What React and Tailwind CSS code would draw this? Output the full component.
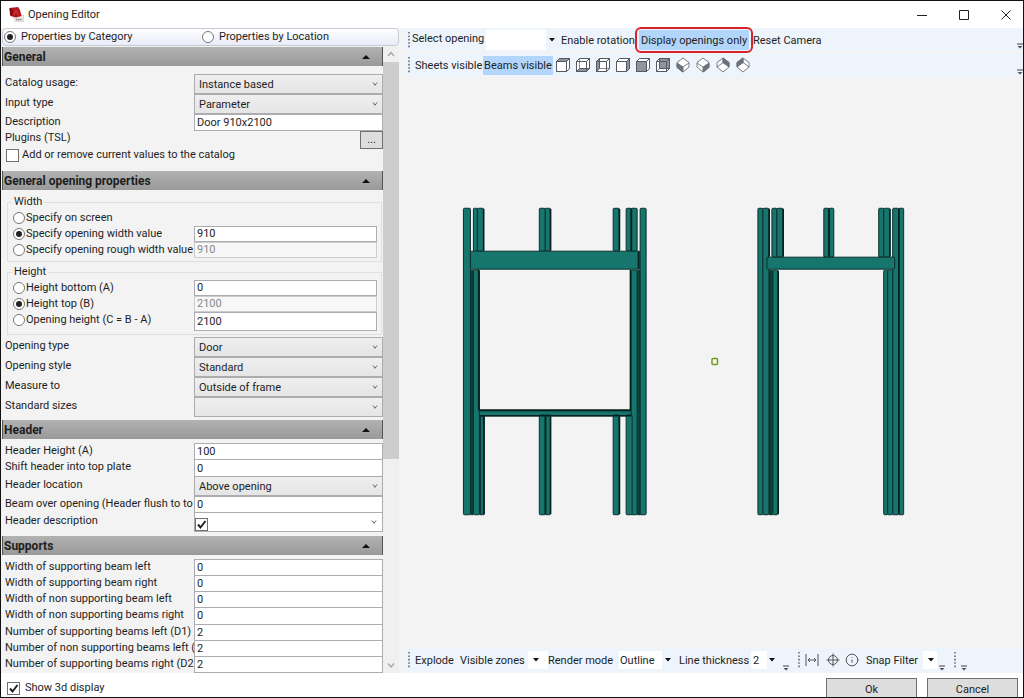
import { Info } from 'lucide-react';

const TEAL = '#16766e';

// each member: [x, y, width, height]
const LEFT_FRAME = [
  [470, 270, 3, 246, 'dark'],
  [463, 208, 7, 308],
  [473, 208, 4, 44],
  [477, 208, 6, 44],
  [539, 208, 6, 44],
  [545, 208, 5, 44],
  [613, 208, 6, 44],
  [626, 208, 5, 44],
  [631, 208, 6, 44],
  [479, 416, 2, 100, 'dark'],
  [480, 416, 4, 100],
  [470, 251, 170, 19],
  [473, 270, 6, 246],
  [637, 270, 4, 246, 'dark'],
  [631, 270, 6, 246],
  [479, 411, 152, 6],
  [539, 415, 6, 101],
  [545, 415, 5, 101],
  [613, 415, 6, 101],
  [626, 415, 6, 101],
  [640, 208, 6, 308],
];

const RIGHT_FRAME = [
  [769, 270, 4, 246, 'dark'],
  [758, 208, 5, 308],
  [763, 208, 6, 308],
  [772, 208, 5, 50],
  [777, 208, 6, 50],
  [824, 208, 5, 50],
  [829, 208, 5, 50],
  [879, 208, 5, 50],
  [884, 208, 6, 50],
  [893, 208, 6, 308],
  [899, 208, 5, 308],
  [773, 270, 5, 246],
  [884, 270, 4, 246],
  [888, 270, 5, 246],
  [767, 257, 128, 13],
];

// right or side edges that are drawn heavier
const HEAVY = [
  [478, 270, 141], [630, 270, 141], [483, 209, 42], [483, 417, 98], [550, 209, 42], [550, 417, 98],
  [619, 209, 42], [619, 417, 98], [545, 417, 98], [631, 209, 42], [638, 252, 17],
  [769, 209, 48], [783, 209, 48], [829, 209, 48], [890, 209, 48], [778, 271, 244], [899, 209, 306],
];

const VIEW_CUBES = ['top', 'bottom', 'left', 'right', 'front', 'back'];
const CUBE_FACES = {
  top: 'M1.5 4.5 4.5 1.5H14.5L11.5 4.5Z',
  bottom: 'M1.5 14.5 4.5 11.5H14.5L11.5 14.5Z',
  left: 'M1.5 4.5 4.5 1.5V11.5L1.5 14.5Z',
  right: 'M11.5 4.5 14.5 1.5V11.5L11.5 14.5Z',
  front: 'M1.5 4.5H11.5V14.5H1.5Z',
  back: 'M4.5 1.5H14.5V11.5H4.5Z',
};
const ISO_FACES = {
  'south west': 'M2 6.5 7.5 10V15L2 10.5Z',
  'south east': 'M14 6.5 8.5 10V15L14 10.5Z',
  'north east': 'M8 1 14 5.5V9.5L8 5.5Z',
  'north west': 'M8 1 2 5.5V9.5L8 5.5Z',
};

function Beam({ x, y, w, h, dark }) {
  return (
    <rect
      x={x}
      y={y + 0.5}
      width={w}
      height={h - 1}
      rx="1"
      fill={dark ? '#0d3f3b' : TEAL}
      stroke="#0b2f2c"
      strokeWidth="1"
    />
  );
}

function Chevron() {
  return (
    <svg viewBox="0 0 6 5" className="pointer-events-none absolute top-1/2 right-[5px] h-[5px] w-[6px] -translate-y-1/2">
      <path d="M1 1 3 3.8 5 1" fill="none" stroke="#666" strokeWidth="1" />
    </svg>
  );
}

function Arrow() {
  return (
    <svg viewBox="0 0 6 4" className="h-1 w-1.5 shrink-0">
      <path d="M0 0H6L3 3.5Z" fill="#111" />
    </svg>
  );
}

function Grip() {
  return (
    <svg viewBox="0 0 2 18" className="h-[18px] w-0.5 shrink-0">
      <path d="M1 1V18" stroke="#555" strokeWidth="1.4" strokeDasharray="1.6 1.8" />
    </svg>
  );
}

function Overflow() {
  return (
    <svg viewBox="0 0 6 6" className="h-1.5 w-1.5 shrink-0">
      <path d="M0 1H6" stroke="#444" strokeWidth="1" />
      <path d="M0.5 3H5.5L3 5.5Z" fill="#555" />
    </svg>
  );
}

function CheckBox({ id, label, checked, bare }) {
  return (
    <span className="relative h-[13px] w-[13px] shrink-0">
      <input
        id={id}
        type="checkbox"
        defaultChecked={checked}
        aria-label={bare ? label : undefined}
        className="peer block h-[13px] w-[13px] appearance-none border border-[#707070] bg-white"
      />
      <svg viewBox="0 0 13 13" className="pointer-events-none absolute inset-0 hidden h-[13px] w-[13px] peer-checked:block">
        <path d="M3 6.5 5.5 9.5 10.5 3" fill="none" stroke="#222" strokeWidth="2" />
      </svg>
    </span>
  );
}

function Radio({ id, name, checked }) {
  return (
    <input
      id={id}
      type="radio"
      name={name}
      defaultChecked={checked}
      className="flex h-3 w-3 shrink-0 appearance-none items-center justify-center rounded-full border border-[#777] bg-white before:hidden before:h-1.5 before:w-1.5 before:rounded-full before:bg-[#222] checked:before:block"
    />
  );
}

function Section({ title, className = '', children }) {
  return (
    <section className={`flex flex-col ${className}`}>
      <h2 className="flex h-[19px] shrink-0 items-center justify-between border-r border-l border-[#555] bg-linear-to-b from-[#b2b2b2] to-[#999] pr-3 pl-px text-xs font-bold">
        {title}
        <svg viewBox="0 0 8 4" className="h-1 w-2">
          <path d="M0 4H8L4 0Z" fill="#111" />
        </svg>
      </h2>
      {children}
    </section>
  );
}

function SelectRow({ id, label, value }) {
  return (
    <div className="flex h-5 items-start">
      <label htmlFor={id} className="w-48 shrink-0 truncate pl-[3px] leading-[18px]">{label}</label>
      <div className="relative h-5 flex-1">
        <select id={id} className="h-5 w-full appearance-none border border-[#acacac] bg-linear-to-b from-[#efefef] to-[#e5e5e5] pt-px pl-1 leading-4">
          <option>{value}</option>
        </select>
        <Chevron />
      </div>
    </div>
  );
}

function TextRow({ id, label, value, className = 'h-4' }) {
  return (
    <div className={`flex items-stretch ${className}`}>
      <label htmlFor={id} className="h-4 w-48 shrink-0 overflow-hidden pl-[3px] leading-4 whitespace-nowrap">{label}</label>
      <input id={id} type="text" defaultValue={value} className="min-w-0 flex-1 border border-b-0 border-[#abadb3] bg-white px-0.5 leading-[15px]" />
    </div>
  );
}

function RadioRow({ id, name, label, value, checked, disabled, className = 'h-4' }) {
  return (
    <div className={`flex items-stretch pl-[5px] ${className}`}>
      <div className="flex h-4 w-[181px] shrink-0 items-center gap-px">
        <Radio id={id} name={name} checked={checked} />
        <label htmlFor={id} className="leading-4 whitespace-nowrap">{label}</label>
      </div>
      {value !== undefined && (
        <input
          type="text"
          aria-label={label}
          defaultValue={value}
          disabled={disabled}
          className="min-w-0 flex-1 border border-[#abadb3] bg-white px-0.5 leading-[14px] disabled:border-[#ccc] disabled:bg-[#f7f7f7] disabled:text-[#888]"
        />
      )}
    </div>
  );
}

function Properties() {
  return (
    <aside className="flex w-100 shrink-0 flex-col pr-0.5 pl-px">
      <div className="flex h-[18px] shrink-0 items-center rounded-sm border border-[#c8cad6] bg-linear-to-b from-white to-[#e9ebf7]">
        <div className="flex w-[199px] items-center gap-[5px] pl-px">
          <Radio id="by-category" name="sort" checked />
          <label htmlFor="by-category">Properties by Category</label>
        </div>
        <div className="flex items-center gap-[5px]">
          <Radio id="by-location" name="sort" />
          <label htmlFor="by-location">Properties by Location</label>
        </div>
      </div>
      <div className="flex min-h-0 flex-1">
        <div className="flex min-w-0 flex-1 flex-col overflow-hidden pt-px">
          <Section title="General" className="pb-[9px]">
            <div className="pt-2">
              <SelectRow id="usage" label="Catalog usage:" value="Instance based" />
              <SelectRow id="input-type" label="Input type" value="Parameter" />
              <TextRow id="description" label="Description" value="Door 910x2100" />
              <div className="flex h-[18px] items-start justify-between">
                <span className="w-48 pl-[3px] leading-4">Plugins (TSL)</span>
                <div className="flex flex-1 justify-end border-t border-[#abadb3]">
                  <button type="button" className="h-[18px] w-[23px] border border-[#707070] bg-[#ddd] leading-4">...</button>
                </div>
              </div>
              <div className="flex h-[14px] items-center gap-[3px] pl-1">
                <CheckBox id="add-remove" />
                <label htmlFor="add-remove">Add or remove current values to the catalog</label>
              </div>
            </div>
          </Section>

          <Section title="General opening properties" className="pb-[3px]">
            <div className="flex flex-col gap-0.5 pt-1 pr-px pb-0.5 pl-[5px]">
              <fieldset className="border border-[#dcdfe3] pr-1 pb-[3px]">
                <legend className="ml-1 px-0.5 leading-4">Width</legend>
                <RadioRow id="w-screen" name="width" label="Specify on screen" />
                <RadioRow id="w-value" name="width" label="Specify opening width value" value="910" checked />
                <RadioRow id="w-rough" name="width" label="Specify opening rough width value" value="910" disabled />
              </fieldset>
              <fieldset className="border border-[#dcdfe3] pr-1 pb-[3px]">
                <legend className="ml-1 px-0.5 leading-4">Height</legend>
                <RadioRow id="h-bottom" name="height" label="Height bottom (A)" value="0" />
                <RadioRow id="h-top" name="height" label="Height top (B)" value="2100" checked disabled />
                <RadioRow id="h-opening" name="height" label="Opening height (C = B - A)" value="2100" className="h-[19px]" />
              </fieldset>
            </div>
            <SelectRow id="o-type" label="Opening type" value="Door" />
            <SelectRow id="o-style" label="Opening style" value="Standard" />
            <SelectRow id="measure" label="Measure to" value="Outside of frame" />
            <SelectRow id="sizes" label="Standard sizes" value="" />
          </Section>

          <Section title="Header" className="pb-1">
            <div className="pt-1">
              <TextRow id="h-height" label="Header Height (A)" value="100" />
              <TextRow id="h-shift" label="Shift header into top plate" value="0" className="h-[17px]" />
              <SelectRow id="h-location" label="Header location" value="Above opening" />
              <TextRow id="h-beam" label="Beam over opening (Header flush to to" value="0" />
              <div className="flex h-5">
                <label htmlFor="h-desc" className="w-48 shrink-0 pl-[3px] leading-[18px]">Header description</label>
                <div className="relative flex flex-1 items-end border border-[#abadb3] bg-white">
                  <CheckBox id="h-desc-on" label="Use header description" checked bare />
                  <select id="h-desc" className="h-full flex-1 appearance-none bg-white">
                    <option></option>
                  </select>
                  <Chevron />
                </div>
              </div>
            </div>
          </Section>

          <Section title="Supports" className="min-h-0 flex-1">
            <div className="flex min-h-0 flex-1 flex-col pt-1">
              <TextRow id="s1" label="Width of supporting beam left" value="0" className="min-h-4 flex-1" />
              <TextRow id="s2" label="Width of supporting beam right" value="0" className="min-h-4 flex-1" />
              <TextRow id="s3" label="Width of non supporting beam left" value="0" className="min-h-4 flex-1" />
              <TextRow id="s4" label="Width of non supporting beams right" value="0" className="min-h-4 flex-1" />
              <TextRow id="s5" label="Number of supporting beams left (D1)" value="2" className="min-h-4 flex-1" />
              <TextRow id="s6" label="Number of non supporting beams left (" value="2" className="min-h-4 flex-1" />
              <TextRow id="s7" label="Number of supporting beams right (D2" value="2" className="min-h-4 flex-1" />
              <div className="ml-48 h-px shrink-0 bg-[#abadb3]" />
            </div>
          </Section>
        </div>
        <div className="flex w-4 shrink-0 flex-col items-center bg-[#f0f0f0]">
          <svg viewBox="0 0 16 16" className="h-4 w-4 shrink-0">
            <path d="M5 10 8 6.5 11 10" fill="none" stroke="#a5a5a5" strokeWidth="1.3" />
          </svg>
          <div className="h-2/3 w-full">
            <div className="h-[95%] w-full bg-[#cdcdcd]" />
          </div>
          <svg viewBox="0 0 16 16" className="mt-auto h-4 w-4 shrink-0">
            <path d="M5 6.5 8 10 11 6.5" fill="none" stroke="#a5a5a5" strokeWidth="1.3" />
          </svg>
        </div>
      </div>
    </aside>
  );
}

function Viewport() {
  return (
    <div className="min-h-0 flex-1 bg-[#f3f3f3]">
      <svg viewBox="403 77 620 571" className="block h-full w-full">
        {[...LEFT_FRAME, ...RIGHT_FRAME].map(([x, y, w, h, kind], i) => (
          <Beam key={i} x={x} y={y} w={w} h={h} dark={kind === 'dark'} />
        ))}
        {HEAVY.map(([x, y, h], i) => (
          <rect key={i} x={x - 0.5} y={y} width="1.6" height={h} fill="#06201e" />
        ))}
        <path d="M479 410.7H631M479 416.4H631" stroke="#06201e" strokeWidth="1.6" />
        <rect x="712" y="359" width="5.5" height="6" rx="1" fill="#f6f9ea" stroke="#6f9a1f" strokeWidth="1.5" />
      </svg>
    </div>
  );
}

function ViewIcons() {
  return (
    <div className="flex items-center gap-1">
      {VIEW_CUBES.map((v) => (
        <button key={v} type="button" aria-label={v} className="h-4 w-4">
          <svg viewBox="0 0 16 16" className="h-4 w-4" fill="none" stroke="#555a62" strokeWidth="1" strokeLinejoin="round">
            <path d="M1.5 4.5 4.5 1.5H14.5V11.5L11.5 14.5H1.5Z" fill="#fff" />
            {v === 'back' || v === 'bottom' || v === 'left' ? (
              <path d="M4.5 1.5V11.5H14.5M4.5 11.5 1.5 14.5" stroke="#8a8e96" />
            ) : null}
            <path d={CUBE_FACES[v]} fill="#8f949f" />
            <path d="M1.5 4.5H11.5V14.5H1.5ZM1.5 4.5 4.5 1.5H14.5V11.5L11.5 14.5M11.5 4.5 14.5 1.5" />
          </svg>
        </button>
      ))}
      {Object.entries(ISO_FACES).map(([v, d]) => (
        <button key={v} type="button" aria-label={v} className="h-4 w-4">
          <svg viewBox="0 0 16 16" className="h-4 w-4" fill="none" stroke="#6a6e76" strokeWidth="0.9" strokeLinejoin="round">
            <path d="M8 1 14 5.5V10L8 15 2 10V5.5Z" fill="#fff" />
            <path d={d} fill="#6d727c" />
            {v.startsWith('south') ? (
              <path d="M2 6 8 10 14 6M8 10V15" />
            ) : (
              <path d="M8 1V5.5L2 10M8 5.5 14 10" />
            )}
          </svg>
        </button>
      ))}
    </div>
  );
}

export default function App() {
  return (
    <div className="flex h-screen flex-col overflow-hidden border border-[#111] bg-white font-[Roboto,sans-serif] text-[11px] leading-4 text-[#1e1e1e]">
      <header className="flex h-[27px] shrink-0 items-center">
        <svg viewBox="0 0 15 15" className="ml-2 h-[15px] w-[15px]">
          <path d="M4 8H14.5V14.5H6Z" fill="#ece8e8" stroke="#c4bcbc" strokeWidth="0.5" />
          <path d="M0.5 1 9 0 11 3 12.5 9 7 10.5 1.500 9Z" fill="#b3141c" />
          <path d="M0.5 1 4 3 3 9 1 8Z" fill="#7d0b12" />
          <path d="M5 8 7 3 9.500 8" fill="none" stroke="#cf3a42" strokeWidth="1" />
          <path d="M7 12.500H13" stroke="#8a8080" strokeWidth="1.500" strokeDasharray="1.500 0.500" />
        </svg>
        <h1 className="ml-1">Opening Editor</h1>
        <div className="mr-3 ml-auto flex items-center gap-8">
          <button type="button" aria-label="Minimize" className="h-2.5 w-2.5">
            <svg viewBox="0 0 10 10" className="h-2.5 w-2.5"><path d="M0 5.5H10" stroke="#222" /></svg>
          </button>
          <button type="button" aria-label="Maximize" className="h-2.5 w-2.5">
            <svg viewBox="0 0 10 10" className="h-2.5 w-2.5"><path d="M0.5 0.5H9.5V9.5H0.5Z" fill="none" stroke="#222" /></svg>
          </button>
          <button type="button" aria-label="Close" className="h-2.5 w-2.5">
            <svg viewBox="0 0 10 10" className="h-2.5 w-2.5"><path d="M0.5 0.5 9.5 9.5M9.5 0.5 0.5 9.5" stroke="#222" /></svg>
          </button>
        </div>
      </header>

      <div className="flex min-h-0 flex-1 bg-[#f3f3f3]">
        <Properties />

        <main className="ml-0.5 flex min-w-0 flex-1 flex-col">
          <div className="flex h-[23px] shrink-0 items-center bg-[#edf4fc] pl-[5px]">
            <Grip />
            <label htmlFor="opening" className="ml-0.5 flex h-full w-[74px] items-start pt-[3px] whitespace-nowrap">Select opening</label>
            <div className="relative h-5 w-[70px]">
              <select id="opening" className="h-5 w-[60px] appearance-none bg-white"><option></option></select>
              <span className="absolute top-2 right-px"><Arrow /></span>
            </div>
            <button type="button" className="ml-[5px] w-[76px] pt-0.5 text-left whitespace-nowrap">Enable rotation</button>
            <button type="button" className="relative ml-0.5 h-5 w-[110px] bg-[#b2d6fb] pt-0.5 whitespace-nowrap">
              Display openings only
              <span className="absolute -inset-x-1 -inset-y-[3px] rounded-md border-2 border-[#d8232a]" />
            </button>
            <button type="button" className="ml-1 pt-0.5 whitespace-nowrap">Reset Camera</button>
            <span className="ml-auto self-end pb-0.5"><Overflow /></span>
          </div>
          <div className="mt-0.5 flex h-6 shrink-0 items-center bg-[#edf4fc] pl-[5px]">
            <Grip />
            <button type="button" className="ml-[5px] w-[68px] pt-0.5 text-left whitespace-nowrap">Sheets visible</button>
            <button type="button" className="mr-0.5 h-[19px] w-[70px] bg-[#b2d6fb] pt-0.5 whitespace-nowrap">Beams visible</button>
            <ViewIcons />
            <span className="ml-auto self-end pb-0.5"><Overflow /></span>
          </div>

          <Viewport />

          <div className="flex h-[26px] shrink-0 items-center bg-[#edf4fc] pl-[5px]">
            <Grip />
            <button type="button" className="ml-[5px] w-[45px] pt-0.5 text-left">Explode</button>
            <label htmlFor="zones" className="w-[68px] pt-0.5 whitespace-nowrap">Visible zones</label>
            <div className="flex h-[18px] w-5 items-center bg-white">
              <select id="zones" className="h-4 w-[5px] appearance-none"><option></option></select>
              <Arrow />
            </div>
            <label htmlFor="render" className="w-[71px] pt-0.5 whitespace-nowrap">Render mode</label>
            <select id="render" className="h-[18px] w-[43px] appearance-none bg-white pt-0.5 pl-px"><option>Outline</option></select>
            <span className="mx-[3px]"><Arrow /></span>
            <label htmlFor="thickness" className="ml-[5px] w-[72px] pt-0.5 whitespace-nowrap">Line thickness</label>
            <select id="thickness" className="h-[18px] w-4 appearance-none bg-white pt-0.5 pl-0.5"><option>2</option></select>
            <span className="ml-0.5"><Arrow /></span>
            <span className="ml-2 self-end pb-0.5"><Overflow /></span>
            <span className="ml-[9px]"><Grip /></span>
            <button type="button" aria-label="Measure" className="ml-[5px] h-3.5 w-3.5">
              <svg viewBox="0 0 14 14" className="h-3.5 w-3.5" fill="none" stroke="#555">
                <path d="M1 1V13M13 1V13M3 7H11M5 5 3 7 5 9M9 5 11 7 9 9" />
              </svg>
            </button>
            <button type="button" aria-label="Target" className="ml-[7px] h-3.5 w-3.5">
              <svg viewBox="0 0 14 14" className="h-3.5 w-3.5" fill="none" stroke="#555">
                <circle cx="7" cy="7" r="4.500" />
                <path d="M7 0.500V13.500M0.500 7H13.500" />
              </svg>
            </button>
            <button type="button" aria-label="Info" className="ml-[5px] h-3.5 w-3.5">
              <Info className="h-3.5 w-3.5 text-[#555]" strokeWidth={1.7} />
            </button>
            <label htmlFor="snap" className="ml-[7px] w-[57px] pt-0.5 whitespace-nowrap">Snap Filter</label>
            <div className="flex h-[18px] w-3.5 items-center bg-white">
              <select id="snap" className="h-4 w-[5px] appearance-none"><option></option></select>
              <Arrow />
            </div>
            <span className="ml-0.5 self-end pb-0.5"><Overflow /></span>
            <span className="ml-[9px]"><Grip /></span>
            <span className="ml-[5px] self-end pb-0.5"><Overflow /></span>
          </div>
        </main>
      </div>

      <footer className="flex h-6 shrink-0 items-start bg-white pr-[5px]">
        <div className="flex items-center gap-[5px] pt-[7px] pl-1.5">
          <CheckBox id="show3d" checked />
          <label htmlFor="show3d">Show 3d display</label>
        </div>
        <div className="mt-[5px] ml-auto flex gap-2.5">
          <button type="button" className="h-[22px] w-[91px] border border-[#707070] bg-[#ddd] pt-px">Ok</button>
          <button type="button" className="h-[22px] w-[91px] border border-[#707070] bg-[#ddd] pt-px">Cancel</button>
        </div>
      </footer>
    </div>
  );
}
